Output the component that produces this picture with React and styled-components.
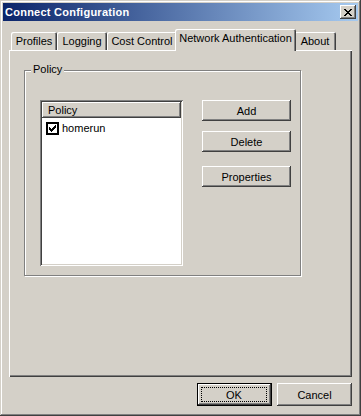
import React from 'react';
import styled, { createGlobalStyle } from 'styled-components';

const Global = createGlobalStyle`
  html, body {
    margin: 0;
    padding: 0;
    background: #d4d0c8;
  }
`;

const Window = styled.div`
  width: 361px;
  height: 416px;
  box-sizing: border-box;
  padding: 3px;
  background: #d4d0c8;
  box-shadow: inset -1px -1px #404040, inset 1px 1px #d4d0c8,
    inset -2px -2px #808080, inset 2px 2px #fff;
  display: flex;
  flex-direction: column;
  font-family: "Liberation Sans", Arial, sans-serif;
  font-size: 11px;
  color: #000;
`;

const TitleBar = styled.div`
  height: 18px;
  flex: 0 0 18px;
  display: flex;
  align-items: center;
  justify-content: space-between;
  padding: 0 2px;
  background: linear-gradient(to right, #0a246a, #a6caf0);
  color: #fff;
  font-weight: bold;
  font-size: 11px;
  letter-spacing: 0.25px;
`;

const CloseButton = styled.div`
  width: 16px;
  height: 14px;
  display: flex;
  align-items: center;
  justify-content: center;
  background: #d4d0c8;
  box-shadow: inset -1px -1px #404040, inset 1px 1px #fff,
    inset -2px -2px #808080;
`;

const Body = styled.div`
  flex: 1;
  display: flex;
  flex-direction: column;
  padding: 0 6px;
`;

const TabStrip = styled.div`
  display: flex;
  align-items: flex-end;
  height: 21px;
  margin-top: 8px;
  padding-left: 2px;
  position: relative;
  z-index: 1;
`;

const Tab = styled.div`
  box-sizing: border-box;
  width: ${p => p.$w}px;
  height: ${p => (p.$active ? 22 : 18)}px;
  margin: ${p => (p.$active ? '0 -2px -1px -2px' : '0')};
  padding-top: ${p => (p.$active ? 3 : 0)}px;
  display: flex;
  justify-content: center;
  align-items: ${p => (p.$active ? 'flex-start' : 'center')};
  line-height: 13px;
  background: #d4d0c8;
  border-radius: 2px 2px 0 0;
  box-shadow: inset 1px 1px #fff, inset -1px 0 #404040, inset -2px 0 #808080;
  position: relative;
  z-index: ${p => (p.$active ? 2 : 1)};
  white-space: nowrap;
`;

const Panel = styled.div`
  flex: 0 0 327px;
  box-sizing: border-box;
  padding: 20px 0 0 15px;
  box-shadow: inset 1px 1px #fff, inset -1px -1px #404040,
    inset -2px -2px #808080;
`;

const GroupBox = styled.div`
  position: relative;
  box-sizing: border-box;
  width: 277px;
  height: 206px;
  border: 1px solid #808080;
  box-shadow: inset 1px 1px #fff, 1px 1px #fff;
  display: flex;
  align-items: flex-start;
  gap: 19px;
  padding: 29px 0 0 15px;
`;

const Legend = styled.span`
  position: absolute;
  top: -8px;
  left: 6px;
  padding: 0 2px;
  line-height: 13px;
  background: #d4d0c8;
`;

const ListView = styled.div`
  box-sizing: border-box;
  width: 143px;
  height: 166px;
  padding: 2px;
  background: #fff;
  box-shadow: inset 1px 1px #808080, inset -1px -1px #fff,
    inset 2px 2px #404040, inset -2px -2px #d4d0c8;
  display: flex;
  flex-direction: column;
`;

const ListHeader = styled.div`
  height: 16px;
  display: flex;
  align-items: center;
  padding-left: 6px;
  line-height: 13px;
  background: #d4d0c8;
  box-shadow: inset -1px -1px #404040, inset 1px 1px #fff,
    inset -2px -2px #808080;
`;

const ListRow = styled.div`
  display: flex;
  align-items: center;
  gap: 3px;
  padding: 4px 0 0 4px;
  line-height: 13px;
`;

const ButtonColumn = styled.div`
  display: flex;
  flex-direction: column;
`;

const Button = styled.button`
  box-sizing: border-box;
  width: ${p => p.$w || 89}px;
  height: ${p => p.$h || 21}px;
  margin-top: ${p => p.$mt || 0}px;
  padding: 0;
  border: none;
  background: #d4d0c8;
  font-family: "Liberation Sans", Arial, sans-serif;
  font-size: 11px;
  color: #000;
  box-shadow: inset -1px -1px #404040, inset 1px 1px #fff,
    inset -2px -2px #808080, inset 2px 2px #d4d0c8;
`;

const DefaultButton = styled(Button)`
  display: flex;
  padding: 3px 4px 3px 3px;
  border: 1px solid #000;
  box-shadow: inset -1px -1px #404040, inset 1px 1px #fff,
    inset -2px -2px #808080;
`;

const FocusRing = styled.span`
  flex: 1;
  display: flex;
  align-items: center;
  justify-content: center;
  border: 1px dotted #000;
`;

const Footer = styled.div`
  display: flex;
  justify-content: flex-end;
  gap: 5px;
  margin-top: 6px;
`;

const closeGlyph = [
  'XX....XX',
  '.XX..XX.',
  '..XXXX..',
  '...XX...',
  '..XXXX..',
  '.XX..XX.',
  'XX....XX',
];

const CloseIcon = () => (
  <svg width="8" height="7" viewBox="0 0 8 7" shapeRendering="crispEdges">
    {closeGlyph.flatMap((row, y) =>
      row.split('').map((c, x) =>
        c === 'X' ? <rect key={`${x}-${y}`} x={x} y={y} width="1" height="1" fill="#000" /> : null
      )
    )}
  </svg>
);

const CheckBox = () => (
  <svg width="13" height="13" viewBox="0 0 13 13" shapeRendering="crispEdges">
    <rect x="0" y="0" width="13" height="13" fill="#000" />
    <rect x="2" y="2" width="9" height="9" fill="#fff" />
    {[
      [3, 5], [4, 6], [5, 7], [6, 6], [7, 5], [8, 4], [9, 3],
    ].map(([x, y]) => (
      <rect key={x} x={x} y={y} width="1" height="3" fill="#000" />
    ))}
  </svg>
);

const tabs = [
  { label: 'Profiles', w: 46 },
  { label: 'Logging', w: 50 },
  { label: 'Cost Control', w: 70 },
  { label: 'Network Authentication', w: 121, active: true },
  { label: 'About', w: 42 },
];

export default function App() {
  return (
    <>
      <Global />
      <Window>
        <TitleBar>
          <span>Connect Configuration</span>
          <CloseButton>
            <CloseIcon />
          </CloseButton>
        </TitleBar>
        <Body>
          <TabStrip>
            {tabs.map(t => (
              <Tab key={t.label} $w={t.w} $active={t.active}>
                {t.label}
              </Tab>
            ))}
          </TabStrip>
          <Panel>
            <GroupBox>
              <Legend>Policy</Legend>
              <ListView>
                <ListHeader>Policy</ListHeader>
                <ListRow>
                  <CheckBox />
                  <span>homerun</span>
                </ListRow>
              </ListView>
              <ButtonColumn>
                <Button>Add</Button>
                <Button $mt={10}>Delete</Button>
                <Button $mt={14}>Properties</Button>
              </ButtonColumn>
            </GroupBox>
          </Panel>
          <Footer>
            <DefaultButton $w={75} $h={23}>
              <FocusRing>OK</FocusRing>
            </DefaultButton>
            <Button $w={75} $h={23}>Cancel</Button>
          </Footer>
        </Body>
      </Window>
    </>
  );
}
